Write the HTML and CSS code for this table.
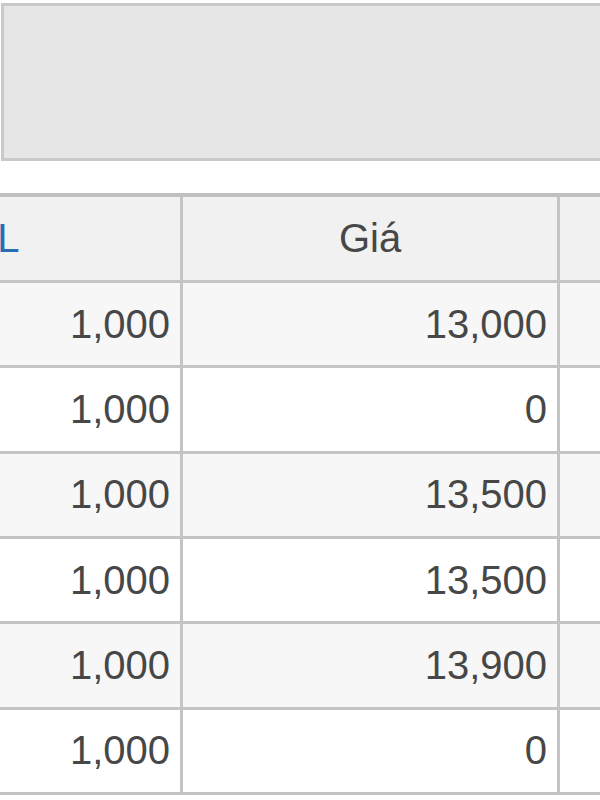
FILE: index.html
```html
<!DOCTYPE html>
<html lang="vi">
<head>
<meta charset="utf-8">
<title>Bảng giá</title>
<link rel="stylesheet" href="styles.css">
</head>
<body>
<div class="panel"></div>
<div class="grid-wrap">
  <table class="grid">
    <colgroup>
      <col class="c-qty">
      <col class="c-price">
      <col class="c-rest">
    </colgroup>
    <thead>
      <tr class="head">
        <th class="link">SL</th>
        <th>Giá</th>
        <th></th>
      </tr>
    </thead>
    <tbody>
      <tr class="odd"><td>1,000</td><td>13,000</td><td></td></tr>
      <tr><td>1,000</td><td>0</td><td></td></tr>
      <tr class="odd"><td>1,000</td><td>13,500</td><td></td></tr>
      <tr><td>1,000</td><td>13,500</td><td></td></tr>
      <tr class="odd"><td>1,000</td><td>13,900</td><td></td></tr>
      <tr><td>1,000</td><td>0</td><td></td></tr>
    </tbody>
  </table>
</div>
</body>
</html>
```
FILE: styles.css
```css
html, body {
  margin: 0;
  padding: 0;
  background: #ffffff;
  overflow: hidden;
}

body {
  width: 600px;
  height: 800px;
  font-family: "Liberation Sans", Arial, sans-serif;
}

.panel {
  margin: 3px 0 0 1px;
  height: 152px;
  border: 3px solid #c9c9c9;
  border-right: none;
  background: #e6e6e6;
}

.grid-wrap {
  margin-top: 32px;
  margin-left: -193px;
}

.grid {
  border-collapse: collapse;
  table-layout: fixed;
  width: 1200px;
  font-size: 40px;
  color: #474747;
}

.c-qty { width: 373px; }
.c-price { width: 377px; }
.c-rest { width: 450px; }

.grid th,
.grid td {
  border: 3px solid #c4c4c4;
  padding: 0 10px 0 10px;
  white-space: nowrap;
  overflow: hidden;
}

.grid thead th {
  border-top: 4px solid #c0c0c0;
  height: 83px;
  background: #f1f1f1;
  font-weight: normal;
  text-align: center;
  color: #474747;
}

.grid th.link {
  color: #2a6cb3;
}

.grid td {
  height: 82.34px;
  text-align: right;
  background: #ffffff;
}

.grid tr.odd td {
  background: #f7f7f7;
}
```
